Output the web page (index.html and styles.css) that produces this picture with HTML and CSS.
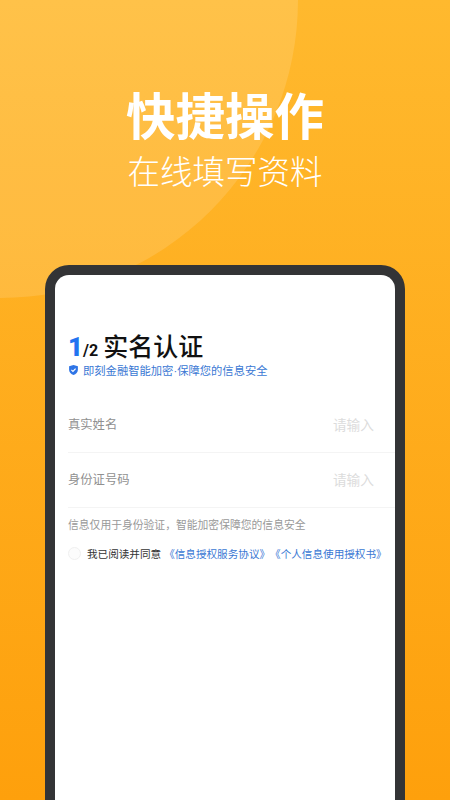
FILE: index.html
```html
<!DOCTYPE html>
<html lang="zh-CN">
<head>
<meta charset="utf-8">
<title>快捷操作</title>
<link rel="stylesheet" href="styles.css">
</head>
<body>
<main class="screen">
  <div class="halo"></div>
  <header class="hero">
    <h1 class="hero-title">快捷操作</h1>
    <p class="hero-sub">在线填写资料</p>
  </header>
  <section class="phone">
    <div class="phone-screen">
      <div class="step">
        <span class="step-num">1</span><span class="step-total">/2</span>
        <h2 class="step-title">实名认证</h2>
      </div>
      <div class="secure">
        <svg class="shield" viewBox="0 0 12 12" aria-hidden="true">
          <path d="M6 .6 10.800 2v3.800c0 2.900-2.100 4.800-4.800 5.700C3.300 10.600 1.200 8.700 1.200 5.800V2Z" fill="#2e74e6"/>
          <path d="M3.700 5.900 5.400 7.500 8.300 4.500" fill="none" stroke="#fff" stroke-width="1.300"/>
        </svg>
        <span>即刻金融智能加密<span class="dot">·</span>保障您的信息安全</span>
      </div>
      <div class="form">
        <div class="field"><span class="label">真实姓名</span><span class="placeholder">请输入</span></div>
        <div class="field"><span class="label">身份证号码</span><span class="placeholder">请输入</span></div>
      </div>
      <p class="note">信息仅用于身份验证，智能加密保障您的信息安全</p>
      <div class="agree">
        <span class="radio"></span>
        <span class="agree-text">我已阅读并同意</span>
        <span class="agree-link">《信息授权服务协议》《个人信息使用授权书》</span>
      </div>
    </div>
  </section>
</main>
</body>
</html>
```
FILE: styles.css
```css
* { box-sizing: border-box; margin: 0; padding: 0; }
html, body { width: 450px; height: 800px; overflow: hidden; }
body { font-family: "Noto Sans CJK SC", "Noto Sans", sans-serif; text-spacing-trim: space-all; }
.screen {
  position: relative;
  width: 450px;
  height: 800px;
  overflow: hidden;
  padding-top: 85px;
  background: linear-gradient(180deg, #ffb92e 0%, #fea00c 100%);
}
.halo {
  position: absolute;
  left: -298px;
  top: -298px;
  width: 596px;
  height: 596px;
  border-radius: 50%;
  background: rgba(255, 255, 255, 0.13);
}
.hero { position: relative; text-align: center; color: #fff; }
.hero-title { font-size: 49.5px; line-height: 58px; font-weight: 700; }
.hero-sub { font-size: 32.5px; line-height: 38px; margin-top: 8px; font-weight: 300; }
.phone {
  position: relative;
  width: 360px;
  height: 565px;
  margin: 76px 0 0 45px;
  border: 10px solid #333436;
  border-bottom: 0;
  border-radius: 24px 24px 0 0;
  background: #333436;
}
.phone-screen {
  height: 100%;
  background: #fff;
  border-radius: 14px 14px 0 0;
  padding: 53px 13px 0;
}
.step { display: flex; align-items: baseline; height: 34px; color: #111; }
.step-num { font-family: "Roboto", sans-serif; font-size: 26px; line-height: 34px; font-weight: 900; color: #2273f0; }
.step-total { font-family: "Roboto", sans-serif; font-size: 16px; font-weight: 700; margin-right: 5px; }
.step-title { font-size: 25px; line-height: 34px; font-weight: 500; }
.secure { display: flex; align-items: center; height: 18px; margin-top: -1px; color: #3a78d4; font-size: 11.3px; white-space: nowrap; }
.dot { font-family: "Liberation Sans", sans-serif; }
.shield { width: 11px; height: 12px; margin-right: 4px; flex: none; }
.form { margin-top: 19px; }
.field {
  display: flex;
  justify-content: space-between;
  align-items: center;
  height: 55px;
  margin-right: -13px;
  padding-right: 21px;
  padding-bottom: 2px;
  border-bottom: 1px solid #f4f4f4;
}
.label { font-size: 12.3px; color: #909090; }
.placeholder { font-size: 13.7px; color: #dcdcdc; }
.note { margin-top: 8px; font-size: 10.8px; line-height: 17px; color: #999; white-space: nowrap; }
.agree { display: flex; align-items: center; height: 20px; margin-top: 10px; font-size: 10.6px; white-space: nowrap; }
.radio { width: 13px; height: 13px; border-radius: 50%; border: 1px solid #f0f0f0; background: #fcfcfc; margin-right: 6px; flex: none; }
.agree-text { color: #333; margin-right: 3px; }
.agree-link { color: #3a78d4; }
```
